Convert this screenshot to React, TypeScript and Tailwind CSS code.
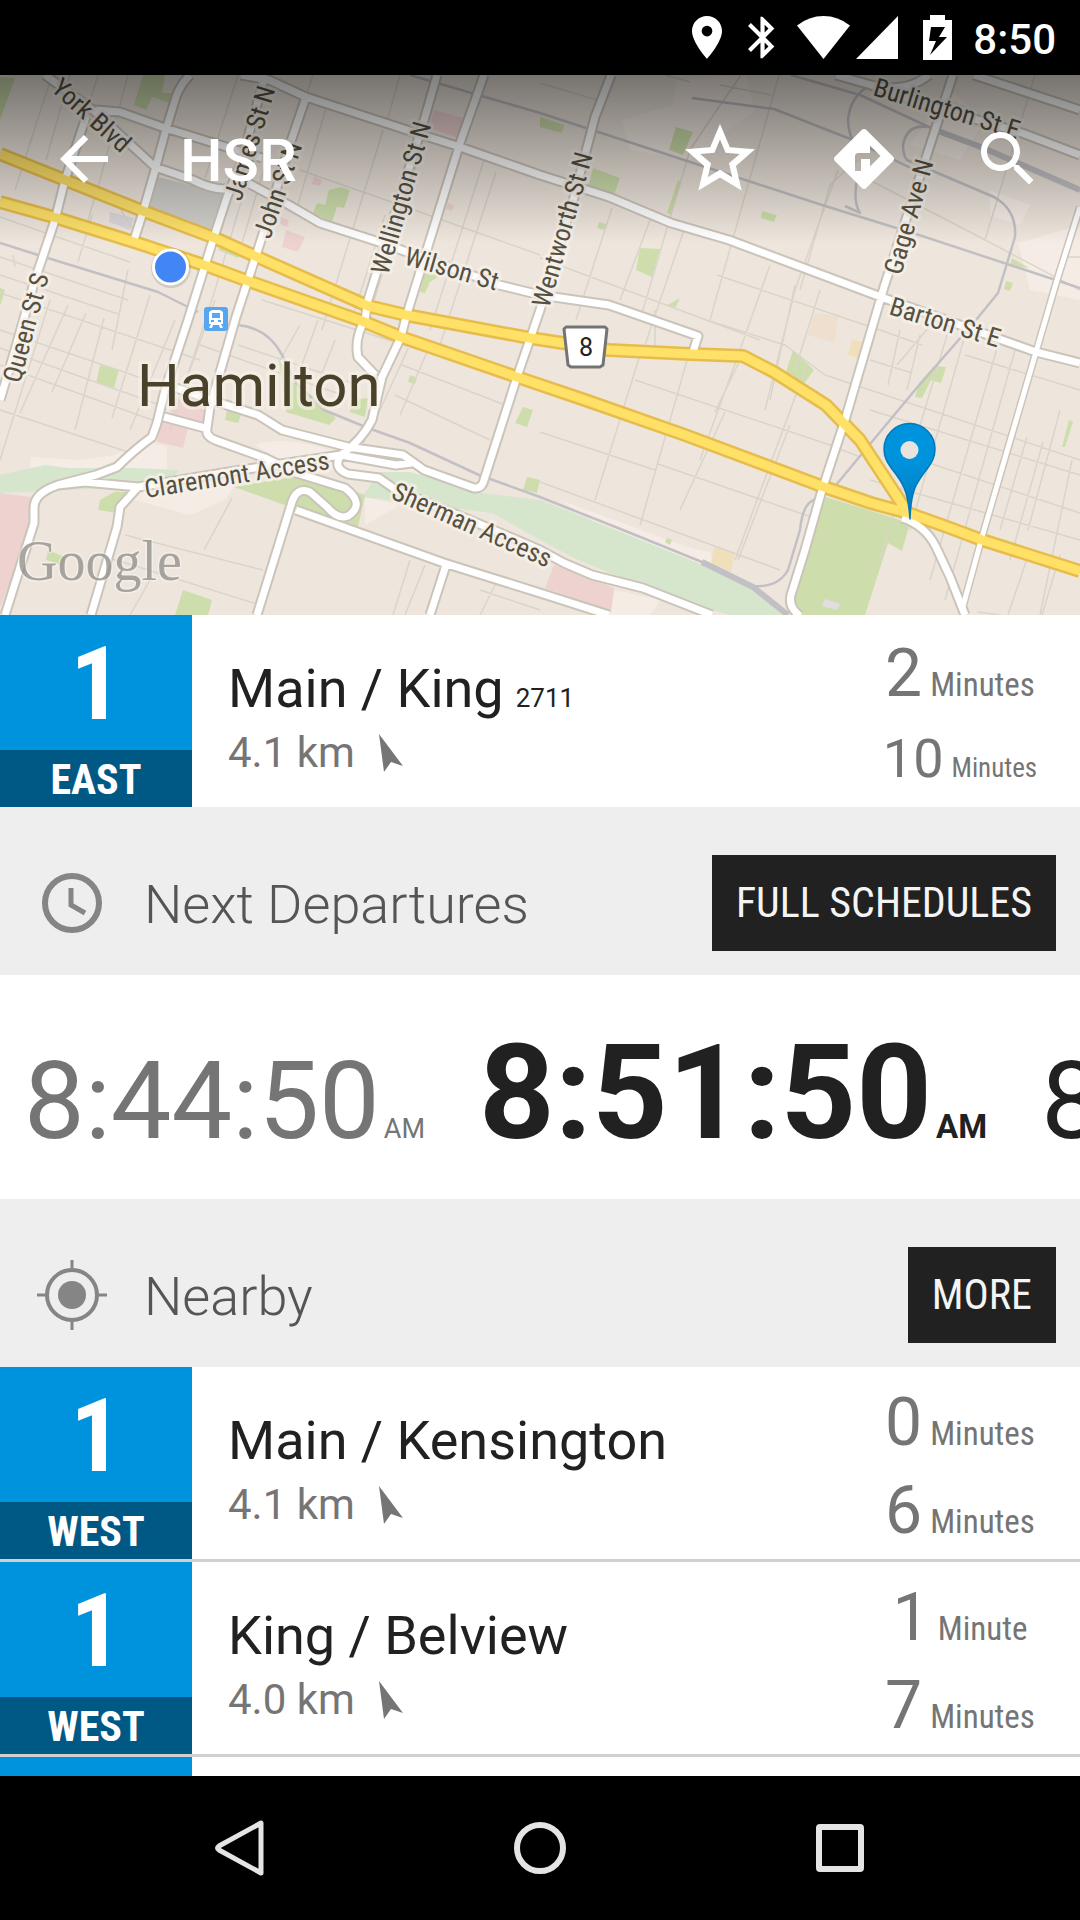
import React from "react";

const condensed = "font-['Roboto_Condensed',Roboto,sans-serif]";

const minorStreets = [
  "M70 75 46 160M98 75 60 200M128 75 100 180 85 230M52 75 15 190M92 215 78 262M118 205 132 228M60 200 20 330 0 400",
  "M238 75 205 178M252 165 215 290 170 430M265 165 240 250M285 170 262 250M313 75 300 115 278 190M326 108 295 215M383 130 322 330M400 75 385 128M420 152 365 330M385 215 355 310M484 160 430 330M496 172 440 345",
  "M300 170 420 212 540 255M0 217 60 238 130 262M0 257 128 300M0 275 118 314M0 293 200 360M0 330 165 386M0 348 160 405M0 365 155 421M0 410 128 452",
  "M13 255 15 267M50 300 0 460M68 305 20 413M86 313 52 392M104 318 75 430M128 270 112 350M150 295 112 418M175 320 130 430M215 300 190 370",
  "M200 345 345 396M238 345 355 384M262 300 420 350M318 320 300 370M335 340 320 378M300 325 280 360",
  "M412 340 380 410M430 345 400 415M395 395 490 440M402 365 505 405M360 460 368 425M125 535 263 570M232 498 204 550M100 555 260 605M150 580 130 615",
  "M410 560 393 615M425 565 405 615M495 585 480 615M480 590 540 610",
  "M540 83 597 100M665 75 690 82M779 75 710 320M720 85 772 95M741 75 710 120 690 150 640 320M612 208 576 320M650 220 620 300M684 230 645 345M540 258 760 340M770 265 740 350 700 460M838 170 795 290 765 410M857 160 830 185 800 290M795 285 770 400M820 290 795 370",
  "M717 275 880 330M655 310 655 345M700 318 785 345 825 375 1080 460M635 380 830 445 860 457M540 432 655 470M725 412 680 510M658 464 820 520M540 482 780 570M640 355 595 500M690 350 640 525M740 360 715 412",
  "M805 370 735 560M790 425 738 560M880 330 922 345M870 360 912 373M935 320 897 365M950 325 880 560M965 335 910 530M998 345 930 580M1015 350 945 600M870 410 1080 475M890 450 1080 513M870 480 1080 540",
  "M1060 410 1028 530M1027 437 1000 530M1043 442 1010 560M1072 460 1040 615M860 175 970 232 1080 290M1035 75 985 240M945 100 975 110M1060 257 1080 257M1030 550 1008 615M1060 555 1042 615M978 612 1000 615M900 330 888 385M920 335 907 390M965 355 1080 390",
];

const railways = [
  "M410 75 540 113 678 158 822 205 919 235 1080 288",
  "M692 98 774 109 853 140 919 172",
  "M791 75 860 95 929 127 981 147 1080 190",
  "M867 87Q850 98 848 120 849 135 853 140M858 175Q852 200 860 213L845 206",
  "M927 127Q907 124 903 145 903 155 907 160L994 197Q1017 210 1015 237L998 293 976 320 915 390 836 485 809 503Q802 510 800 530L788 570Q778 588 753 586",
  "M0 243 38 255 103 275 158 292 198 312",
  "M238 325Q268 328 282 355L296 383 324 410 368 428 410 443 479 475 540 497 623 530 702 562 753 587 788 615",
];

const roads = [
  "M45 75 93 110 155 167 193 180Q217 192 231 188L248 183 289 205 320 223 379 242 499 285 540 295 609 305 698 336 693 352",
  "M86 117 65 180 55 220 34 283 15 350 0 400",
  "M96 110 120 112 165 128 220 145 262 158",
  "M190 75Q180 85 176 97L165 133 155 170 143 212 134 240",
  "M265 75 241 163 227 197 213 240 188 320 165 390 157 423 152 437Q134 450 117 467L96 475 58 485Q34 493 34 508L34 523 5 615",
  "M306 97 289 147 262 237 236 317 210 407 207 428Q205 436 215 440L265 458 296 473 345 488Q366 504 348 516 338 520 327 507L310 492Q296 486 291 505L257 615",
  "M296 510 444 563 540 593 609 615M446 565 430 615",
  "M241 75 269 80 306 97 413 132 460 147 540 175 609 197 671 223 729 240 881 297 1036 352 1080 363",
  "M437 75 425 117 368 300 365 320Q354 338 358 357L375 375",
  "M484 75 460 143 406 317 401 337 382 377 372 420Q362 440 341 455L241 470 138 487 120 507 117 527 91 615",
  "M58 485 85 482 138 487M164 417 205 428",
  "M176 388 220 403 258 415 282 430 348 447 403 455 424 470 474 488Q482 489 484 480L517 377 540 310 574 197 595 117 611 75",
  "M341 455 396 465 412 463M341 455Q332 468 348 474L379 478 396 490 470 520 540 550 564 563 592 575 643 588 712 615",
  "M953 75 936 127 884 287 845 420 822 490 805 550 791 595Q788 607 800 616",
  "M836 75 871 85 920 103 1022 133 1080 155M974 75 1080 110M929 75Q905 94 871 85",
  "M902 518Q925 525 936 547L950 577 965 615",
];

const sideRoads = ["M1080 207 1057 280 1036 352 982 537 962 610"];

const highways = [
  "M0 154 65 180 143 211 215 238 255 256 368 306 406 315 530 338 609 350 691 354 743 356 774 372 826 405 860 440 908 513",
  "M0 202 57 218 134 242 207 266 248 281 362 321 401 337 517 377 585 400 685 435 824 487 871 503 908 513 950 528 982 540 1080 571",
];

const parks = [
  "M0 77 15 78 0 120Z",
  "M143 75H165L162 93 174 93 170 103 152 97 146 110 134 105Z",
  "M341 187 350 190 344 208 337 207 332 222 313 213 317 203 325 205 329 190Z",
  "M425 273 441 275 430 282 425 293 420 292Z",
  "M540 117 564 125 562 133 540 127Z",
  "M676 127 693 132 683 155 669 150Z",
  "M593 168 620 178 614 195 588 188Z",
  "M762 211 777 215 774 222 761 218Z",
  "M678 180 681 182 671 215 667 213Z",
  "M640 248 660 249 652 277 636 270Z",
  "M599 222 606 224 604 230 597 228Z",
  "M1012 258 1029 268 1010 265ZM1006 281 1013 283 1010 291 1004 289Z",
  "M0 288 5 290 0 306Z",
  "M100 365 119 370 114 388 96 383Z",
  "M227 410 241 415 238 423 225 420Z",
  "M279 360 300 385 336 418 329 425 286 412Z",
  "M351 400 368 398 365 417 350 412ZM410 375 417 378 415 384 408 382Z",
  "M100 500 114 492 129 492 117 513 98 510Z",
  "M48 550 65 557 62 565 46 560Z",
  "M183 590 212 600 208 615 175 615Z",
  "M523 407 533 410 527 427 515 423ZM527 477 540 480 537 493 523 490Z",
  "M234 487 303 475 365 495 358 527 300 510 279 503Z",
  "M793 350 814 370 803 385 785 375Z",
  "M934 366 946 367 941 383 931 380 922 398 915 397 919 383Z",
  "M1069 420 1073 422 1065 447 1062 447Z",
  "M826 497 910 523 902 551 888 543 865 615 790 615 805 550Z",
  "M220 247 240 255 238 258 218 250ZM666 306 680 298 676 307ZM667 538 672 540 670 545 665 542Z",
];

const labels = [
  { text: "York Blvd", x: 50, y: 90, angle: 42 },
  { text: "James St N", x: 241, y: 202, angle: -73 },
  { text: "John St N", x: 270, y: 240, angle: -71 },
  { text: "Wellington St N", x: 388, y: 276, angle: -74 },
  { text: "Wentworth St N", x: 549, y: 309, angle: -74 },
  { text: "Wilson St", x: 403, y: 264, angle: 16 },
  { text: "Burlington St E", x: 872, y: 95, angle: 17 },
  { text: "Gage Ave N", x: 901, y: 276, angle: -74 },
  { text: "Barton St E", x: 888, y: 314, angle: 17 },
  { text: "Queen St S", x: 20, y: 384, angle: -75 },
  { text: "Claremont Access", x: 146, y: 498, angle: -9 },
  { text: "Sherman Access", x: 390, y: 498, angle: 24 },
];

function CityMap() {
  return (
    <svg
      className="absolute inset-0 h-full w-full"
      viewBox="0 75 1080 540"
      preserveAspectRatio="xMidYMid slice"
      role="img"
      aria-label="Map of Hamilton"
      fill="none"
      strokeLinejoin="round"
    >
      <defs>
        <linearGradient id="pin" x1="0" y1="0" x2="0" y2="1">
          <stop offset="0.4" stopColor="#0093dd" />
          <stop offset="1" stopColor="#0079ba" />
        </linearGradient>
      </defs>
      <rect x="0" y="75" width="1080" height="540" fill="#eee6dd" />
      <g fill="#f5ece5">
        <path d="M31 457 80 460 115 455 145 440 167 447V475L30 470ZM255 445Q280 435 330 450L395 463 470 490 380 478 280 460ZM130 490 240 478 225 500 190 515 135 500Z" />
        <path d="M1018 243 1080 225V300L1030 290 1024 265ZM365 497 400 505 365 525ZM560 500 690 548 710 552 720 580 600 525ZM615 590 660 600 650 615H610ZM676 80 745 75 755 110 690 160 630 150 622 120 673 105Z" />
        <path d="M950 90 985 120 960 160 910 145ZM990 190 1030 205 1020 225 990 215Z" />
      </g>
      <path
        fill="#d6e6cd"
        d="M0 475 45 465 69 468 131 468 179 470 172 480 131 487 69 490 0 493ZM379 472 410 472 482 493 540 500 616 530 698 563 753 587 786 615H729L643 587 574 558 540 540 492 513 413 503 362 497Z"
      />
      <g fill="#cddeac">
        {parks.map((d) => (
          <path key={d} d={d} />
        ))}
      </g>
      <path
        fill="#edd2cf"
        d="M0 493 31 497 34 523 0 607ZM176 398 207 407 203 427 169 417ZM162 420 188 428 183 448 157 442ZM554 565 614 588 611 612 545 588ZM434 110 463 118 458 138 429 128ZM314 176 322 180 320 186 312 184ZM286 230 305 237 298 252 282 247ZM281 217 289 220 287 227 280 224ZM448 203 454 205 452 211 446 209Z"
      />
      <path fill="#d0cfcb" d="M158 177 224 193 213 235 150 207Z" />
      <path fill="#dbd6dc" d="M110 212 134 218 130 230 109 222Z" />
      <path fill="#efdfba" d="M714 547 735 554 731 572 711 563ZM852 339 862 342 859 358 848 355Z" />
      <path fill="#efdfcf" d="M814 313 838 316 835 343 808 335Z" />
      <path fill="#e3dde1" d="M825 599 840 604 837 610 822 606Z" />
      <path d={minorStreets.join("")} stroke="#dad4ca" strokeWidth="1.5" />
      <path d={railways.join("")} stroke="#c2c0c4" strokeWidth="2.5" />
      <path d="M702 562 753 587 788 615M930 128 981 147 1080 190" stroke="#c2c0c4" strokeWidth="6" />
      <path d={roads.join("")} stroke="#cbc4ba" strokeWidth="11" />
      <path d={sideRoads.join("")} stroke="#cbc4ba" strokeWidth="8" />
      <path d={highways.join("")} stroke="#e6bd4d" strokeWidth="14" />
      <path d={roads.join("")} stroke="#fff" strokeWidth="7" />
      <path d={sideRoads.join("")} stroke="#fff" strokeWidth="5" />
      <path d={highways.join("")} stroke="#ffe168" strokeWidth="9" />

      <g
        className="font-['Roboto_Condensed',Roboto,sans-serif] text-[26px]"
        fill="#565040"
        stroke="#f6f1ea"
        strokeWidth="6"
        strokeOpacity="0.75"
        paintOrder="stroke"
      >
        {labels.map((l) => (
          <text key={l.text} x={l.x} y={l.y} transform={`rotate(${l.angle} ${l.x} ${l.y})`}>
            {l.text}
          </text>
        ))}
      </g>
      <text
        x="137"
        y="406"
        className="font-[Roboto,sans-serif] text-[60px]"
        fill="#4a412a"
        stroke="#f6f1ea"
        strokeWidth="7"
        strokeOpacity="0.6"
        paintOrder="stroke"
      >
        Hamilton
      </text>

      <g transform="translate(204 307)">
        <rect width="24" height="24" rx="3" fill="#57a7ef" />
        <path fill="#fff" d="M8 3h8l3 2v12h-2l2 4h-3l-1-3H9l-1 3H5l2-4H5V5z" />
        <path fill="#57a7ef" d="M8 6h8v5H8zM7 13h3v2H7zM14 13h3v2h-3z" />
      </g>
      <path d="M566 327H605L607 329 603 365 600 367H571L568 365 564 329Z" fill="#fff" stroke="#747474" strokeWidth="3" />
      <text x="586" y="356" textAnchor="middle" fill="#222" className="font-[Roboto,sans-serif] text-[25px]">
        8
      </text>
      <circle cx="171" cy="268" r="20" fill="#000" opacity="0.12" />
      <circle cx="170.5" cy="267" r="17" fill="#4285f4" stroke="#fff" strokeWidth="3" />
      <path
        fill="url(#pin)"
        stroke="#0079ba"
        strokeWidth="1.5"
        d="M910 519C908 490 903 483 892 469 887 462 884 457 884 449A25.5 25.5 0 0 1 935 449C935 457 932 462 927 469 916 483 911 490 910 519Z"
      />
      <circle cx="909.5" cy="450" r="9" fill="#e9e3dd" />
      <text
        x="17"
        y="580"
        className="font-['Liberation_Serif',serif] text-[56px]"
        fill="#8d8984"
        fillOpacity="0.75"
        stroke="#fff"
        strokeOpacity="0.35"
        strokeWidth="3"
        paintOrder="stroke"
      >
        Google
      </text>
    </svg>
  );
}

function StatusBar() {
  return (
    <div className="flex h-[75px] shrink-0 items-center justify-end bg-black pr-6 text-white">
      <svg className="mr-[26px] h-[43px] w-[30px]" viewBox="5 2 14 20" fill="currentColor" aria-hidden="true">
        <path d="M12 2C8.130 2 5 5.130 5 9c0 5.250 7 13 7 13s7-7.750 7-13c0-3.870-3.130-7-7-7zm0 9.500a2.500 2.500 0 0 1 0-5 2.500 2.500 0 0 1 0 5z" />
      </svg>
      <svg className="mr-[22px] h-[43px] w-[27px]" viewBox="5 2 13 20" fill="currentColor" aria-hidden="true">
        <path d="M17.710 7.710 12 2h-1v7.590L6.410 5 5 6.410 10.590 12 5 17.590 6.410 19 11 14.410V22h1l5.710-5.710-4.300-4.290 4.300-4.290zM13 5.830l1.880 1.880L13 9.590V5.830zm1.880 10.460L13 18.170v-3.760l1.880 1.880z" />
      </svg>
      <svg className="mr-[6px] h-[43px] w-[53px]" viewBox="0 0 53 43" fill="currentColor" aria-hidden="true">
        <path d="M26.500 43 0 9.500Q12 0 26.500 0T53 9.500Z" />
      </svg>
      <svg className="mr-[25px] h-[43px] w-[42px]" viewBox="0 0 42 43" fill="currentColor" aria-hidden="true">
        <path d="M0 43H42V0Z" />
      </svg>
      <svg className="mr-[21px] h-[45px] w-[29px]" viewBox="0 0 29 45" fill="currentColor" aria-hidden="true">
        <path fillRule="evenodd" d="M7 0H22V5H29V45H0V5H7ZM8 12 6 26H13L7 40 24 22H16L22 12Z" />
      </svg>
      <time className="pt-1 text-[42px] leading-none font-medium">8:50</time>
    </div>
  );
}

const toolIcon = "flex h-full w-36 items-center justify-center";

function MapHeader() {
  return (
    <header className="relative h-[540px] shrink-0 overflow-hidden">
      <CityMap />
      <div className="relative flex h-[168px] items-center bg-linear-to-b from-black/50 to-transparent text-white">
        <button type="button" aria-label="Back" className="ml-12 flex size-[72px] items-center justify-center">
          <svg className="size-[72px]" viewBox="0 0 24 24" fill="currentColor">
            <path d="M20 11H7.830l5.590-5.590L12 4l-8 8 8 8 1.410-1.410L7.830 13H20v-2z" />
          </svg>
        </button>
        <h1 className="ml-[60px] flex-1 pt-1 text-[60px] leading-none font-medium">HSR</h1>
        <button type="button" aria-label="Favourite" className={toolIcon}>
          <svg className="size-[84px]" viewBox="0 0 24 24" fill="currentColor">
            <path d="M22 9.240l-7.190-.62L12 2 9.190 8.630 2 9.240l5.460 4.730L5.820 21 12 17.270 18.180 21l-1.630-7.030L22 9.240zM12 15.100l-3.500 2.110.93-3.980-3.090-2.680 4.070-.35L12 6.440l1.590 3.760 4.070.35-3.090 2.680.93 3.980L12 15.100z" />
          </svg>
        </button>
        <button type="button" aria-label="Directions" className={toolIcon}>
          <svg className="size-[72px]" viewBox="0 0 24 24" fill="currentColor">
            <path d="M21.710 11.290l-9-9c-.39-.39-1.020-.39-1.410 0l-9 9c-.39.39-.39 1.020 0 1.410l9 9c.39.39 1.020.39 1.410 0l9-9c.39-.38.39-1.010 0-1.410zM14 14.500V12h-3v4H9v-5c0-.55.45-1 1-1h4V7.500l3.500 3.500-3.500 3.500z" />
          </svg>
        </button>
        <button type="button" aria-label="Search" className={toolIcon}>
          <svg className="size-[72px]" viewBox="0 0 24 24" fill="currentColor">
            <path d="M15.500 14h-.79l-.28-.27C15.410 12.590 16 11.110 16 9.500 16 5.910 13.090 3 9.500 3S3 5.910 3 9.500 5.910 16 9.500 16c1.610 0 3.090-.59 4.230-1.570l.27.28v.79l5 4.990L20.490 19l-4.990-5zm-6 0C7.010 14 5 11.990 5 9.500S7.010 5 9.500 5 14 7.010 14 9.500 11.990 14 9.500 14z" />
          </svg>
        </button>
      </div>
    </header>
  );
}

type Stop = {
  route: string;
  direction: string;
  name: string;
  code?: string;
  distance: string;
  times: { value: number; small?: boolean }[];
};

function StopRow({ stop }: { stop: Stop }) {
  return (
    <article className="flex h-48 shrink-0 bg-white">
      <div className={`${condensed} flex w-48 shrink-0 flex-col text-center font-bold text-white`}>
        <div className="h-[135px] bg-[#0093dd] text-[102px] leading-[138px]">{stop.route}</div>
        <div className="h-[57px] bg-[#005985] text-[42px] leading-[60px]">{stop.direction}</div>
      </div>
      <div className="flex min-w-0 flex-1 flex-col justify-center pt-4 pl-9">
        <h2 className="text-[54px] leading-[68px] whitespace-nowrap text-[#212121]">
          {stop.name}
          {stop.code && <span className="ml-3 text-[26px] leading-none">{stop.code}</span>}
        </h2>
        <p className="flex items-center text-[42px] leading-[60px] text-[#757575]">
          {stop.distance}
          <svg className="ml-6 h-[38px] w-6" viewBox="0 0 24 38" fill="currentColor" aria-hidden="true">
            <path d="M0 0 24 32 12 28 5 38Z" />
          </svg>
        </p>
      </div>
      <div className="flex w-60 shrink-0 flex-col justify-center pt-2 text-center text-[#757575]">
        {stop.times.map((t) => (
          <p
            key={t.value}
            className={t.small ? "text-[54px] leading-[82px]" : "text-[66px] leading-[88px]"}
          >
            {t.value}
            <span className={`${condensed} ml-2 leading-none ${t.small ? "text-[27px]" : "text-[33px]"}`}>
              {t.value === 1 ? "Minute" : "Minutes"}
            </span>
          </p>
        ))}
      </div>
    </article>
  );
}

function SectionBar({ icon, title, action }: { icon: React.ReactNode; title: string; action: string }) {
  return (
    <div className="flex shrink-0 items-center bg-[#eeeeee] pt-12 pr-6 pb-6 pl-9 text-[#858585]">
      {icon}
      <h2 className="ml-9 flex-1 pt-1 text-[54px] leading-[64px] font-light text-[#555555]">{title}</h2>
      <button
        type="button"
        className={`${condensed} h-24 bg-[#212121] px-6 text-[42px] leading-none text-[#f4f4f4]`}
      >
        {action}
      </button>
    </div>
  );
}

const current: Stop = {
  route: "1",
  direction: "EAST",
  name: "Main / King",
  code: "2711",
  distance: "4.1 km",
  times: [{ value: 2 }, { value: 10, small: true }],
};

const nearby: Stop[] = [
  { route: "1", direction: "WEST", name: "Main / Kensington", distance: "4.1 km", times: [{ value: 0 }, { value: 6 }] },
  { route: "1", direction: "WEST", name: "King / Belview", distance: "4.0 km", times: [{ value: 1 }, { value: 7 }] },
];

export default function App() {
  return (
    <div className="flex h-screen w-full flex-col overflow-hidden bg-white font-[Roboto,sans-serif]">
      <StatusBar />
      <MapHeader />
      <main className="flex min-h-0 flex-1 flex-col overflow-hidden">
        <StopRow stop={current} />
        <SectionBar
          title="Next Departures"
          action="FULL SCHEDULES"
          icon={
            <svg className="size-[72px]" viewBox="0 0 72 72" fill="none" stroke="currentColor" strokeWidth="6" aria-hidden="true">
              <circle cx="36" cy="36" r="27" />
              <path d="M35 21V38L49 46" strokeWidth="5" />
            </svg>
          }
        />
        <div className="flex h-56 shrink-0 items-baseline overflow-hidden pt-7 pl-6 whitespace-nowrap text-[#212121]">
          <p className="shrink-0 text-[108px] text-[#757575]">
            8:44:50<span className="ml-1 text-[27px]">AM</span>
          </p>
          <p className="ml-[54px] shrink-0 text-[132px] leading-[180px] font-bold">
            8:51:50<span className="ml-1 text-[33px]">AM</span>
          </p>
          <p className="ml-[54px] shrink-0 text-[108px]">8</p>
        </div>
        <SectionBar
          title="Nearby"
          action="MORE"
          icon={
            <svg className="size-[72px]" viewBox="0 0 72 72" fill="none" stroke="currentColor" strokeWidth="4" aria-hidden="true">
              <circle cx="36" cy="36" r="25" />
              <circle cx="36" cy="36" r="14" fill="currentColor" stroke="none" />
              <path d="M36 1V11M36 61V71M1 36H11M61 36H71" strokeWidth="3" />
            </svg>
          }
        />
        <div className="flex flex-col divide-y-3 divide-[#d0d0d0]">
          {nearby.map((s) => (
            <div key={s.name}>
              <StopRow stop={s} />
            </div>
          ))}
          <div className="h-48">
            <div className="h-[135px] w-48 bg-[#0093dd]" />
          </div>
        </div>
      </main>
      <nav aria-label="System" className="flex h-36 shrink-0 items-center justify-center bg-black text-[#e4e4e4]">
        <button type="button" aria-label="Back" className="flex h-full w-[300px] items-center justify-center">
          <svg className="size-[60px]" viewBox="0 0 60 60" fill="none" stroke="currentColor" strokeWidth="5" strokeLinejoin="round">
            <path d="M51 5V55L9 32Q6 30 9 28Z" />
          </svg>
        </button>
        <button type="button" aria-label="Home" className="flex h-full w-[300px] items-center justify-center">
          <svg className="size-[60px]" viewBox="0 0 60 60" fill="none" stroke="currentColor" strokeWidth="6">
            <circle cx="30" cy="30" r="23" />
          </svg>
        </button>
        <button type="button" aria-label="Recent apps" className="flex h-full w-[300px] items-center justify-center">
          <svg className="size-[60px]" viewBox="0 0 60 60" fill="none" stroke="currentColor" strokeWidth="6">
            <rect x="9" y="9" width="42" height="42" rx="1" />
          </svg>
        </button>
      </nav>
    </div>
  );
}
